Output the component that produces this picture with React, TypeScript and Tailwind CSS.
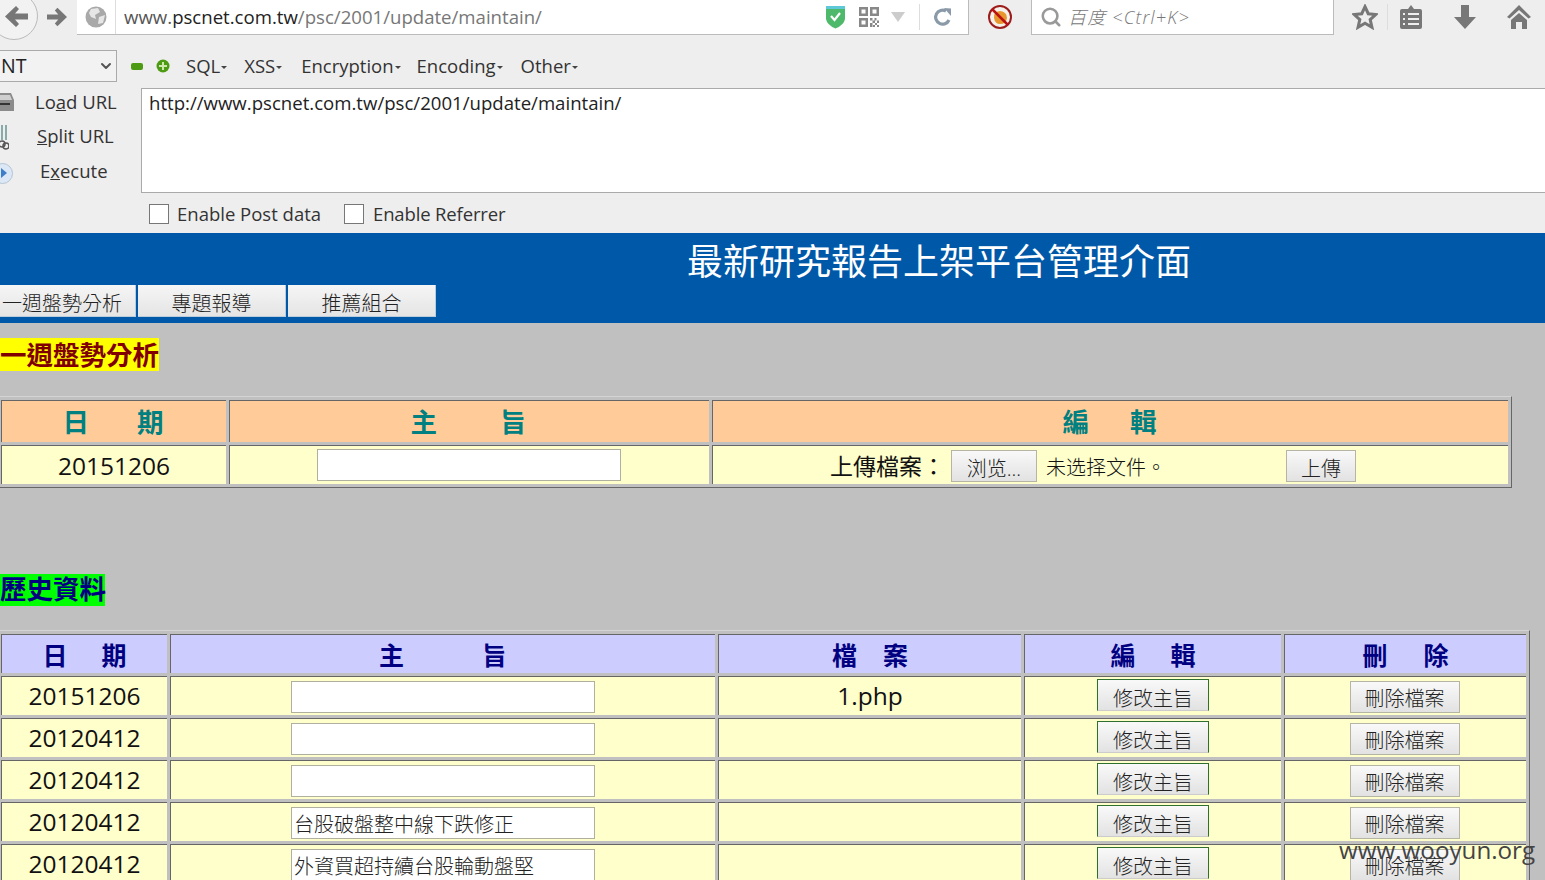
import { ChevronDown, Search } from "lucide-react";

const rows = [
  { date: "20151206", subject: "", file: "1.php" },
  { date: "20120412", subject: "", file: "" },
  { date: "20120412", subject: "", file: "" },
  { date: "20120412", subject: "台股破盤整中線下跌修正", file: "" },
  { date: "20120412", subject: "外資買超持續台股輪動盤堅", file: "" },
];

const cellHead = "flex items-center justify-center font-bold border-t border-l border-[#666]";
const cellBody = "flex items-center justify-center bg-[#ffffcc] border-t border-l border-[#666] text-[#111]";
const btnBase =
  "flex items-center justify-center bg-gradient-to-b from-[#f9f9f9] to-[#e2e2e2] border text-[20px] font-light text-[#222]";
const grayBtn = `${btnBase} border-[#b5b5a5]`;

function Toolbar() {
  return (
    <div className="flex items-start h-[44px] text-[#777]">
      <div className="w-[48px] h-[48px] -mt-[8px] -ml-[10px] shrink-0 rounded-full border border-[#bbb] bg-[#f2f2f2] flex items-center justify-center pl-[4px]">
        <svg width="23" height="21" viewBox="0 0 23 21">
          <path d="M11 0 L0 10.5 L11 21 L14 18 L10 13.5 L23 13.5 L23 7.5 L10 7.5 L14 3 Z" fill="#777" />
        </svg>
      </div>
      <div className="w-[39px] h-[34px] shrink-0 flex items-center pl-[9px]">
        <svg width="20" height="20" viewBox="0 0 23 21">
          <path d="M12 0 L23 10.5 L12 21 L9 18 L13 13.5 L0 13.5 L0 7.5 L13 7.5 L9 3 Z" fill="#777" />
        </svg>
      </div>
      <div className="w-[892px] h-[35px] shrink-0 flex items-center bg-white border-b border-r border-[#bbb]">
        <div className="w-[39px] h-[34px] flex items-center justify-center border-r border-[#ddd]">
          <svg width="22" height="22" viewBox="0 0 22 22">
            <circle cx="11" cy="11" r="10.5" fill="#a9a9a9" />
            <path d="M6 3 L13 2 L15 6 L10 9 L11 13 L6 11 L4 7 Z M14 11 L20 9 L18 17 L13 18 Z" fill="#e6e6e6" />
          </svg>
        </div>
        <div className="ml-[8px] text-[18.6px] leading-none whitespace-nowrap">
          <span className="text-[#555]">www.</span>
          <span className="text-[#222]">pscnet.com.tw</span>
          <span className="text-[#777]">/psc/2001/update/maintain/</span>
        </div>
        <div className="ml-auto flex items-center">
          <svg width="21" height="24" viewBox="0 0 21 24">
            <path d="M1 1 L20 1 L20 14 Q19 20 10.5 23.5 Q2 20 1 14 Z" fill="#4fb96b" />
            <path d="M1 1 L20 1 L20 4 L1 4 Z" fill="#5fc8d8" />
            <path d="M6 11 L9.5 15 L15 8" fill="none" stroke="#fff" strokeWidth="2.2" />
          </svg>
          <svg width="22" height="22" viewBox="0 0 22 22" className="ml-[12px]">
            <path
              d="M1 1h9v9H1z M3.5 3.5v4h4v-4z M12 1h9v9h-9z M14.5 3.5v4h4v-4z M1 12h9v9H1z M3.5 14.5v4h4v-4z"
              fill="#888"
              fillRule="evenodd"
            />
            <path
              d="M12 12h2.5v2.5H12z M16.5 12h2v2.5h-2z M19 14.5h2V17h-2z M14.5 14.5h2.5V17h-2.5z M12 17h2.5v4H12z M17 17h2v2h-2z M15 19h2v2h-2z M19 19h2v2h-2z"
              fill="#888"
            />
          </svg>
          <svg width="16" height="12" viewBox="0 0 16 12" className="ml-[10px]">
            <path d="M1 1 L15 1 L8 11 Z" fill="#ccc" />
          </svg>
          <div className="w-px h-[26px] bg-[#ddd] ml-[13px]" />
          <svg width="20" height="20" viewBox="0 0 20 20" className="ml-[13px] mr-[15px]">
            <path d="M16 13 A7 7 0 1 1 13 4" fill="none" stroke="#8a9aa8" strokeWidth="3.2" />
            <path d="M11 1 L18 1.5 L18 9 Z" fill="#8a9aa8" />
          </svg>
        </div>
      </div>
      <svg width="26" height="26" viewBox="0 0 26 26" className="ml-[18px] mt-[4px] shrink-0">
        <circle cx="13" cy="13" r="11" fill="#f4f0ea" stroke="#9c1c1c" strokeWidth="2" />
        <path d="M7 14 Q6 8 13 7 Q20 8 20 14 Q19 20 13 20 Q8 20 7 14 Z" fill="#e8962e" />
        <path d="M5 5 L21 21" stroke="#b11" strokeWidth="2.5" />
      </svg>
      <div className="w-[303px] h-[35px] ml-[18px] shrink-0 flex items-center bg-white border border-t-0 border-[#bbb] pl-[8px]">
        <Search size={22} strokeWidth={2.8} className="text-[#999]" />
        <span className="ml-[6px] text-[18px] italic font-light text-[#777] leading-none tracking-[1.2px]">
          百度 &lt;Ctrl+K&gt;
        </span>
      </div>
      <div className="h-[34px] flex items-center ml-[18px]">
        <svg width="26" height="26" viewBox="0 0 24 24">
          <path
            d="M12 2.5 L15 9 L22 9.7 L16.8 14.4 L18.4 21.5 L12 17.8 L5.6 21.5 L7.2 14.4 L2 9.7 L9 9 Z"
            fill="none"
            stroke="#777"
            strokeWidth="2.8"
          />
        </svg>
        <div className="w-px h-[26px] bg-[#ddd] ml-[9px]" />
        <svg width="24" height="26" viewBox="0 0 24 26" className="ml-[11px]">
          <path d="M3 5 H9 L12 1 L15 5 H21 Q23 5 23 7 V23 Q23 25 21 25 H3 Q1 25 1 23 V7 Q1 5 3 5 Z" fill="#777" />
          <path d="M4 10 H6 M9 10 H20 M4 15 H6 M9 15 H20 M4 20 H6 M9 20 H20" stroke="#eee" strokeWidth="2" />
        </svg>
        <svg width="24" height="26" viewBox="0 0 24 26" className="ml-[30px]">
          <path d="M8 1 H16 V13 H23 L12 25 L1 13 H8 Z" fill="#777" />
        </svg>
        <svg width="26" height="26" viewBox="0 0 26 26" className="ml-[29px]">
          <path d="M13 1 L25 13 L22.5 14.5 L13 6 L3.5 14.5 L1 13 Z" fill="#777" />
          <path d="M13 9 L21 16 V25 H16 V18 H10 V25 H5 V16 Z" fill="#777" />
        </svg>
      </div>
    </div>
  );
}

function HackBar() {
  return (
    <div className="h-[189px] flex flex-col">
      <div className="h-[44px] pt-[6px] flex items-start">
        <div className="w-[117px] h-[32px] flex items-center justify-between bg-[#f2f2f2] border border-l-0 border-[#aaa] text-[19.5px] text-[#222] pr-[2px]">
          <span className="ml-[1px]">NT</span>
          <ChevronDown size={16} strokeWidth={3} className="text-[#555]" />
        </div>
        <div className="h-[32px] flex items-center text-[18.5px] text-[#333]">
          <div className="ml-[14px] w-[12px] h-[7px] rounded-[2px] bg-[#4d9b12]" />
          <svg width="14" height="14" viewBox="0 0 14 14" className="ml-[13px]">
            <circle cx="7" cy="7" r="6.5" fill="#4d9b12" />
            <path d="M6 3h2v3h3v2H8v3H6V8H3V6h3z" fill="#cfe8b0" />
          </svg>
          {[
            ["SQL", 16],
            ["XSS", 17],
            ["Encryption", 19],
            ["Encoding", 16],
            ["Other", 18],
          ].map(([name, gap]) => (
            <span key={name} className="flex items-center" style={{ marginLeft: gap as number }}>
              {name}
              <span className="ml-[1px] mt-[2px] border-x-[3px] border-t-[3px] border-x-transparent border-t-[#444]" />
            </span>
          ))}
        </div>
      </div>
      <div className="flex h-[105px] shrink-0">
        <div className="w-[141px] shrink-0 flex flex-col text-[18.5px] text-[#333] leading-none">
          <div className="h-[34px] flex items-center relative pl-[35px] pb-[5px]">
            <svg width="15" height="20" viewBox="0 0 15 20" className="absolute left-0 top-[4px]">
              <path d="M0 1 H11 L14 8 V19 H0 Z" fill="#8b8b8b" />
              <path d="M0 3 H10 L12 8 H0 Z" fill="#cfcfcf" />
              <path d="M0 12 H10" stroke="#333" strokeWidth="2" />
            </svg>
            Lo<u>a</u>d URL
          </div>
          <div className="h-[34px] flex items-center relative pl-[37px] pb-[5px]">
            <svg width="10" height="26" viewBox="0 0 10 26" className="absolute -left-[1px] top-[2px]">
              <path d="M3 1 V16 M7 1 V16" stroke="#8aa" strokeWidth="2" />
              <circle cx="3" cy="20" r="3" fill="none" stroke="#555" strokeWidth="1.5" />
              <circle cx="7" cy="22" r="3" fill="none" stroke="#555" strokeWidth="1.5" />
            </svg>
            <u>S</u>plit URL
          </div>
          <div className="h-[34px] flex items-center relative pl-[40px] pb-[3px]">
            <span className="absolute -left-[8px] top-[7px] w-[21px] h-[21px] rounded-full bg-[#dce8f5] border border-[#b4c4d4]" />
            <span className="absolute left-[1px] top-[12px] border-y-[5px] border-l-[6px] border-y-transparent border-l-[#3d7fc9]" />
            E<u>x</u>ecute
          </div>
        </div>
        <div className="flex-1 -mr-[2px] bg-white border border-[#aaa] pl-[7px] pt-[1px] text-[18.6px] text-[#222] leading-[26px]">
          http://www.pscnet.com.tw/psc/2001/update/maintain/
        </div>
      </div>
      <div className="flex items-center pl-[149px] h-[40px] pt-[2px] text-[18.5px] text-[#333]">
        <span className="w-[20px] h-[20px] bg-white border border-[#777]" />
        <span className="ml-[8px]">Enable Post data</span>
        <span className="ml-[23px] w-[20px] h-[20px] bg-white border border-[#777]" />
        <span className="ml-[9px] tracking-[-0.15px]">Enable Referrer</span>
      </div>
    </div>
  );
}

function PageHeader() {
  return (
    <div className="h-[90px] bg-[#0059a8] flex flex-col">
      <div className="h-[52px] pl-[687px] text-[36px] leading-[58px] text-white whitespace-nowrap">
        最新研究報告上架平台管理介面
      </div>
      <div className="flex gap-[2px] text-[20px] font-light text-[#222]">
        {[
          ["一週盤勢分析", "w-[136px] justify-start pl-[2px]"],
          ["專題報導", "w-[148px] justify-center"],
          ["推薦組合", "w-[148px] justify-center"],
        ].map(([label, width]) => (
          <div
            key={label}
            className={`${width} h-[32px] flex items-center pt-[6px] whitespace-nowrap bg-gradient-to-b from-[#f6f6f6] to-[#e4e4e4] border-r border-b border-[#bcd]`}
          >
            {label}
          </div>
        ))}
      </div>
    </div>
  );
}

function HeadLabel({ a, b, gap }: { a: string; b: string; gap: string }) {
  return (
    <span className={`flex ${gap}`}>
      <span>{a}</span>
      <span>{b}</span>
    </span>
  );
}

function UploadTable() {
  return (
    <div className="w-[1512px] h-[92px] mt-[25px] p-[3px] pl-[1px] pr-[3px] border-t border-r border-b border-t-[#d4d4d4] border-r-[#666] border-b-[#666] grid grid-cols-[225px_480px_796px] grid-rows-[42px_39px] gap-[3px]">
      {[
        ["日", "期", "gap-[48px]"],
        ["主", "旨", "gap-[63px]"],
        ["編", "輯", "gap-[41px]"],
      ].map(([a, b, gap]) => (
        <div key={a} className={`${cellHead} bg-[#ffcc99] text-[#008080] text-[26.5px] pt-[3px] pr-[2px]`}>
          <HeadLabel a={a} b={b} gap={gap} />
        </div>
      ))}
      <div className={`${cellBody} text-[24.5px] pt-[2px]`}>20151206</div>
      <div className={cellBody}>
        <div className="w-[304px] h-[32px] mr-[2px] bg-white border border-[#b0b0a0]" />
      </div>
      <div className={`${cellBody} justify-start pl-[117px]`}>
        <span className="text-[23px] whitespace-nowrap pt-[3px]">上傳檔案：</span>
        <div className={`${grayBtn} w-[86px] h-[32px] ml-[6px] mt-[2px] pt-[6px]`}>浏览...</div>
        <span className="ml-[9px] w-[240px] text-[20px] font-light whitespace-nowrap pt-[5px]">未选择文件。</span>
        <div className={`${grayBtn} w-[70px] h-[32px] mt-[2px] pt-[6px]`}>上傳</div>
      </div>
    </div>
  );
}

function HistoryTable() {
  return (
    <div className="w-[1530px] mt-[24px] p-[3px] pl-[1px] border-t border-r border-t-[#d4d4d4] border-r-[#666] grid grid-cols-[166px_545px_303px_257px_242px] auto-rows-[39px] gap-[3px]">
      {[
        ["日", "期", "gap-[34px]"],
        ["主", "旨", "gap-[78px]"],
        ["檔", "案", "gap-[26px]"],
        ["編", "輯", "gap-[35px]"],
        ["刪", "除", "gap-[36px]"],
      ].map(([a, b, gap]) => (
        <div key={a} className={`${cellHead} bg-[#ccccff] text-[#000080] text-[25px] pt-[3px]`}>
          <HeadLabel a={a} b={b} gap={gap} />
        </div>
      ))}
      {rows.map((row, i) => (
        <div key={i} className="contents">
          <div className={`${cellBody} text-[24.5px]`}>{row.date}</div>
          <div className={`${cellBody} justify-start pl-[120px]`}>
            <div className="w-[304px] h-[32px] mt-[2px] bg-white border border-[#b0b0a0] pl-[2px] pt-[4px] text-[20px] leading-[26px] font-light text-[#222] whitespace-nowrap">
              {row.subject}
            </div>
          </div>
          <div className={`${cellBody} text-[24.5px]`}>{row.file}</div>
          <div className={cellBody}>
            <div className={`${btnBase} w-[112px] h-[32px] mb-[3px] pt-[8px] border-[#2f6f2f] border-b-[#ccc]`}>
              修改主旨
            </div>
          </div>
          <div className={cellBody}>
            <div className={`${grayBtn} w-[110px] h-[32px] mt-[1px] mr-[2px] pt-[4px]`}>刪除檔案</div>
          </div>
        </div>
      ))}
    </div>
  );
}

export default function App() {
  return (
    <div className="relative w-[1545px] h-[880px] overflow-hidden bg-[#c0c0c0] font-['Open_Sans','Noto_Sans_CJK_TC',sans-serif]">
      <div className="bg-[#eeeeee]">
        <Toolbar />
        <HackBar />
      </div>
      <PageHeader />
      <div className="mt-[15px] w-[159px] h-[33px] bg-[#ffff00] text-[#800000] text-[26.5px] font-bold leading-[35px] whitespace-nowrap">
        一週盤勢分析
      </div>
      <UploadTable />
      <div className="mt-[86px] w-[105px] h-[32px] bg-[#00ff00] text-[#000080] text-[26.5px] font-bold leading-[31px] whitespace-nowrap">
        歷史資料
      </div>
      <HistoryTable />
      <div className="absolute left-[1339px] top-[835px] text-[24.2px] leading-[30px] text-[#444]">
        www.wooyun.org
      </div>
    </div>
  );
}
